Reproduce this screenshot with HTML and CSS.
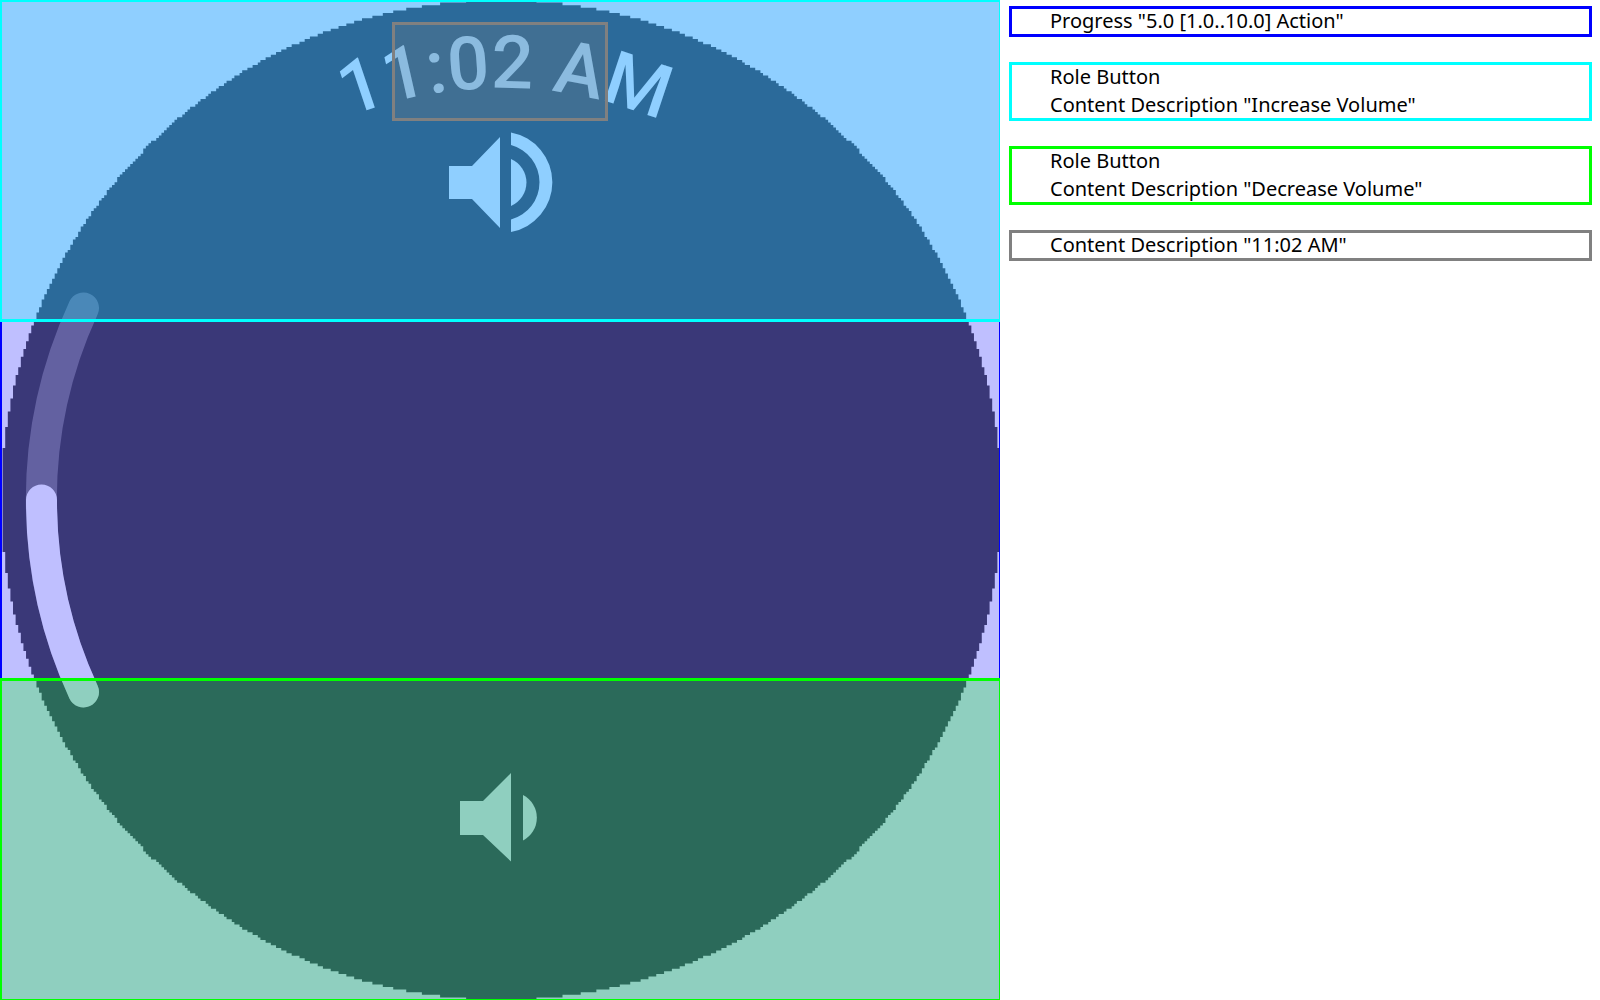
FILE: index.html
```html
<!DOCTYPE html>
<html lang="en">
<head>
<meta charset="utf-8">
<title>Volume screen accessibility</title>
<link rel="stylesheet" href="styles.css">
</head>
<body>
<main class="report">
  <svg class="screen" viewBox="0 0 1000 1000" role="img" aria-label="Volume screen with accessibility regions">
    <defs>
      <path id="time-curve" d="M88 500A412 412 0 0 1 912 500"/>
    </defs>
    <path id="face" class="face" d="M0 500A500 500 0 0 1 1000 500A500 500 0 0 1 0 500Z"/>
    <path class="track" d="M83.500 692A458 458 0 0 1 83.500 308"/>
    <path class="level" d="M83.500 692A458 458 0 0 1 41.500 500"/>
    <text class="time"><textPath href="#time-curve" startOffset="50.4%">11:02 AM</textPath></text>
    <g class="icon">
      <path d="M449 166H472L500 137V228L472 199H449Z"/>
      <path d="M511 159A25.6 25.6 0 0 1 511 206Z"/>
      <path d="M511 132.500A50.6 50.6 0 0 1 511 232V219.500A38.6 38.6 0 0 0 511 145Z"/>
    </g>
    <g class="icon">
      <path d="M460 801H483L511 773V861.500L483 835H460Z"/>
      <path d="M523 795A25.6 25.6 0 0 1 523 840.500Z"/>
    </g>
    <rect class="region blue" x="0.5" y="0.5" width="1000" height="1000"/>
    <rect class="region cyan" x="0.5" y="0.5" width="1000" height="320"/>
    <rect class="region green" x="0.5" y="679.5" width="1000" height="321"/>
    <rect class="region gray" x="393.5" y="23.5" width="213" height="96"/>
  </svg>
  <section class="legend">
    <ul class="entry blue"><li>Progress "5.0 [1.0..10.0] Action"</li></ul>
    <ul class="entry cyan"><li>Role Button</li><li>Content Description "Increase Volume"</li></ul>
    <ul class="entry green"><li>Role Button</li><li>Content Description "Decrease Volume"</li></ul>
    <ul class="entry gray"><li>Content Description "11:02 AM"</li></ul>
  </section>
</main>
<script src="face.js"></script>
</body>
</html>
```
FILE: styles.css
```css
* {
  box-sizing: border-box;
}

body {
  margin: 0;
  background: #fff;
  color: #000;
  font: 20px/23px "Noto Sans", sans-serif;
}

.blue { --mark: #00f; }
.cyan { --mark: #0ff; }
.green { --mark: #0f0; }
.gray { --mark: #808080; }

.report {
  display: grid;
  grid-template-columns: 5fr 3fr;
  align-items: start;
}

.screen {
  display: block;
  width: 100%;
  overflow: hidden;
}

.face {
  fill: #4e4b4b;
}

.track,
.level {
  fill: none;
  stroke: #fff;
  stroke-width: 31px;
  stroke-linecap: round;
}

.track {
  stroke-opacity: 0.31;
}

.time {
  fill: #fff;
  font: 500 74px Roboto, sans-serif;
  text-anchor: middle;
}

.icon {
  fill: #fff;
}

.region {
  fill: var(--mark);
  fill-opacity: 0.25;
  stroke: var(--mark);
  stroke-width: 3px;
}

.legend {
  display: flex;
  flex-direction: column;
  gap: 25px;
  padding: 6px 8px 6px 9px;
}

.entry {
  display: flex;
  flex-direction: column;
  gap: 5px;
  margin: 0;
  padding: 0 38px 2px;
  border: 3px solid var(--mark);
  list-style: none;
}
```
FILE: face.js
```js
// Outline of the round display, stepped to its 384 x 384 pixel grid.
const size = 384;
const radius = size / 2;
const unit = 1000 / size;
const left = [];
const right = [];
for (let row = 0; row < size; row++) {
  const dy = row + 0.5 - radius;
  const inset = radius - Math.sqrt(radius * radius - dy * dy);
  for (const edge of [row, row + 1]) {
    left.push([Math.ceil(inset) * unit, edge * unit]);
    right.push([(size - Math.floor(inset)) * unit, edge * unit]);
  }
}
const points = left.concat(right.reverse());
document.getElementById("face").setAttribute("d", "M" + points.map((p) => p.join(" ")).join("L") + "Z");
```
